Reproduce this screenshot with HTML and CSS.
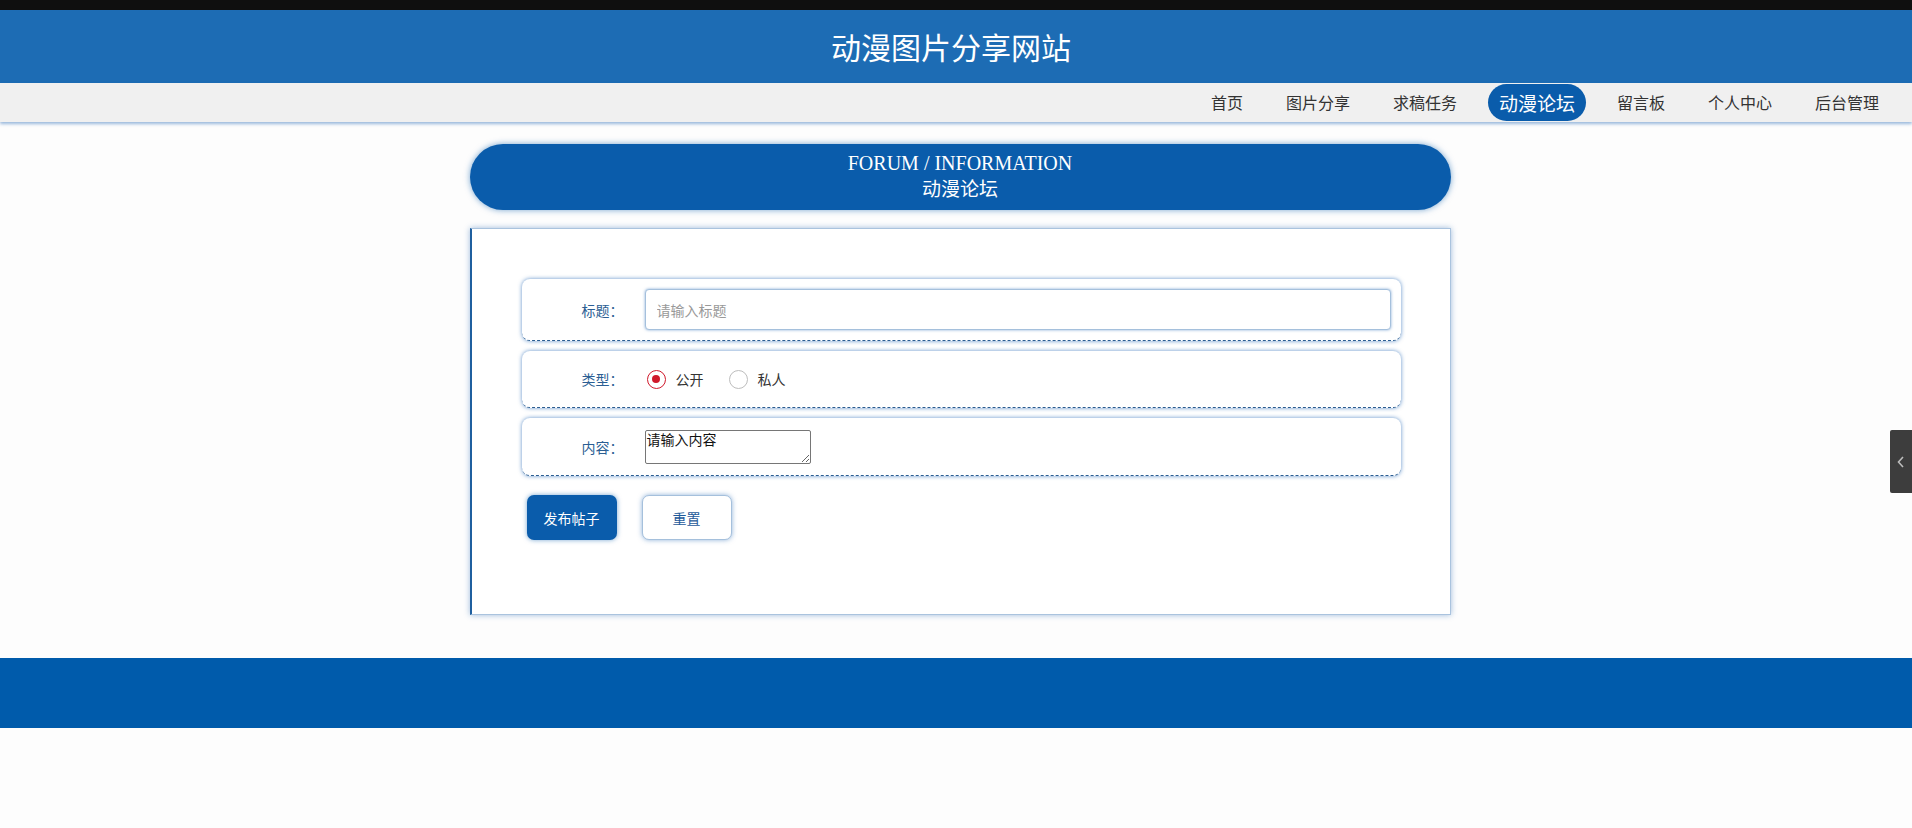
FILE: index.html
```html
<!DOCTYPE html>
<html lang="zh-CN">
  <head>
    <meta charset="UTF-8" />
    <meta name="viewport" content="width=device-width, initial-scale=1.0" />
    <title>动漫论坛</title>
    <link rel="stylesheet" href="styles.css">
  </head>
  <body>
    <div class="top-strip"></div>
    <header class="site-header">
      <h1>动漫图片分享网站</h1>
    </header>
    <nav class="nav">
      <a href="#">首页</a>
      <a href="#">图片分享</a>
      <a href="#">求稿任务</a>
      <a href="#" class="active">动漫论坛</a>
      <a href="#">留言板</a>
      <a href="#">个人中心</a>
      <a href="#">后台管理</a>
    </nav>

    <div class="main">
      <div class="title-pill">
        <p class="en">FORUM / INFORMATION</p>
        <p class="cn">动漫论坛</p>
      </div>

      <div class="card">
        <div class="form-row">
          <label class="form-label">标题：</label>
          <input type="text" class="text-input" placeholder="请输入标题">
        </div>
        <div class="form-row radio-row">
          <label class="form-label">类型：</label>
          <span class="radio checked"><i></i>公开</span>
          <span class="radio"><i></i>私人</span>
        </div>
        <div class="form-row content-row">
          <label class="form-label">内容：</label>
          <textarea class="content-input">请输入内容</textarea>
        </div>
        <div class="button-group">
          <button class="btn-primary">发布帖子</button>
          <button class="btn-reset">重置</button>
        </div>
      </div>
    </div>

    <footer class="footer"></footer>

    <div class="side-tab">
      <svg width="10" height="14" viewBox="0 0 10 14"><path d="M7 2 L2.5 7 L7 12" fill="none" stroke="#bdbdbd" stroke-width="1.6"/></svg>
    </div>
  </body>
</html>
```

FILE: styles.css
```css
* {
  margin: 0;
  padding: 0;
  box-sizing: border-box;
}

body {
  font-family: "Noto Sans CJK SC", "Microsoft YaHei", sans-serif;
  background: #fdfdfd;
  color: #333;
  width: 1912px;
  min-height: 828px;
  overflow: hidden;
}

.top-strip {
  height: 10px;
  background: #0f0f0f;
}

.site-header {
  height: 73px;
  background: #1d6cb4;
  text-align: center;
  padding-right: 10px;
}

.site-header h1 {
  font-size: 30px;
  font-weight: 400;
  line-height: 73px;
  color: #fff;
}

/* nav bar */
.nav {
  height: 39px;
  background: #f0f0f0;
  display: flex;
  justify-content: flex-end;
  align-items: center;
  gap: 19px;
  padding-right: 21px;
  box-shadow: 0 2px 3px rgba(30, 100, 180, 0.45);
  position: relative;
  z-index: 2;
}

.nav a {
  font-size: 16px;
  color: #333;
  text-decoration: none;
  padding: 0 12px;
  line-height: 37px;
}

.nav a.active {
  background: #0a5cab;
  color: #fff;
  font-size: 19px;
  border-radius: 19px;
  padding: 0 11px;
}

.main {
  width: 989px;
  padding-left: 8px;
  margin: 22px auto 0;
}

.title-pill {
  height: 66px;
  border-radius: 33px;
  background: #0a5cab;
  box-shadow: 0 0 6px rgba(10, 92, 171, 0.55);
  color: #fff;
  text-align: center;
  padding-top: 8px;
}

.title-pill .en {
  font-family: "Liberation Serif", serif;
  font-size: 20px;
  line-height: 23px;
}

.title-pill .cn {
  font-size: 19px;
  line-height: 25px;
}

.card {
  margin-top: 18px;
  height: 387px;
  background: #fff;
  border: 1px solid #aac3de;
  border-left: 2px solid #1f5f9f;
  box-shadow: 0 0 6px rgba(20, 90, 170, 0.4);
  padding: 50px 49px 0 50px;
}

.form-row {
  display: flex;
  align-items: center;
  padding: 10px 0;
  margin-bottom: 10px;
  border-radius: 8px;
  border-bottom: 1px dashed #2b5d91;
  box-shadow: 0 0 4px rgba(30, 100, 180, 0.7);
}

.radio-row {
  height: 57px;
}

.content-row {
  height: 58px;
  padding: 0;
}

.form-label {
  width: 102px;
  text-align: right;
  margin-right: 21px;
  font-size: 14px;
  color: #2b5e93;
}

.text-input {
  flex: 1;
  height: 41px;
  margin-right: 10px;
  border: 1px solid #a5c0dc;
  border-radius: 4px;
  box-shadow: 0 0 3px rgba(30, 100, 180, 0.55);
  padding: 0 11px;
  font-family: inherit;
  font-size: 14px;
  outline: none;
}

.text-input::placeholder {
  color: #999;
}

.radio {
  display: inline-flex;
  align-items: center;
  gap: 10px;
  font-size: 14px;
  color: #333;
  margin-left: 2px;
  margin-right: 23px;
}

.radio i {
  width: 19px;
  height: 19px;
  border-radius: 50%;
  border: 1px solid #bdbdbd;
  display: inline-flex;
  align-items: center;
  justify-content: center;
}

.radio.checked i {
  border-color: #d0182a;
}

.radio.checked i::after {
  content: "";
  width: 8px;
  height: 8px;
  border-radius: 50%;
  background: #d0182a;
}

.content-input {
  width: 166px;
  height: 34px;
  border: 1px solid #767676;
  border-radius: 2px;
  font-family: inherit;
  font-size: 14px;
  line-height: 17px;
  color: #111;
  padding: 0 1px;
  resize: both;
}

.button-group {
  display: flex;
  gap: 25px;
  margin-top: 19px;
  padding-left: 5px;
}

.btn-primary,
.btn-reset {
  width: 90px;
  height: 45px;
  border-radius: 7px;
  font-family: inherit;
  font-size: 14px;
  cursor: pointer;
}

.btn-primary {
  background: #0a5cab;
  color: #fff;
  border: none;
  box-shadow: 0 0 5px rgba(10, 92, 171, 0.55);
}

.btn-reset {
  background: #fff;
  color: #1e5a9a;
  border: 1px solid #a5c0dc;
  box-shadow: 0 0 5px rgba(30, 100, 180, 0.5);
}

.footer {
  height: 70px;
  margin-top: 43px;
  background: #005bab;
}

.side-tab {
  position: fixed;
  right: 0;
  top: 430px;
  width: 22px;
  height: 63px;
  background: #3d3d3d;
  border-radius: 2px 0 0 2px;
  display: flex;
  align-items: center;
  justify-content: center;
}
```
